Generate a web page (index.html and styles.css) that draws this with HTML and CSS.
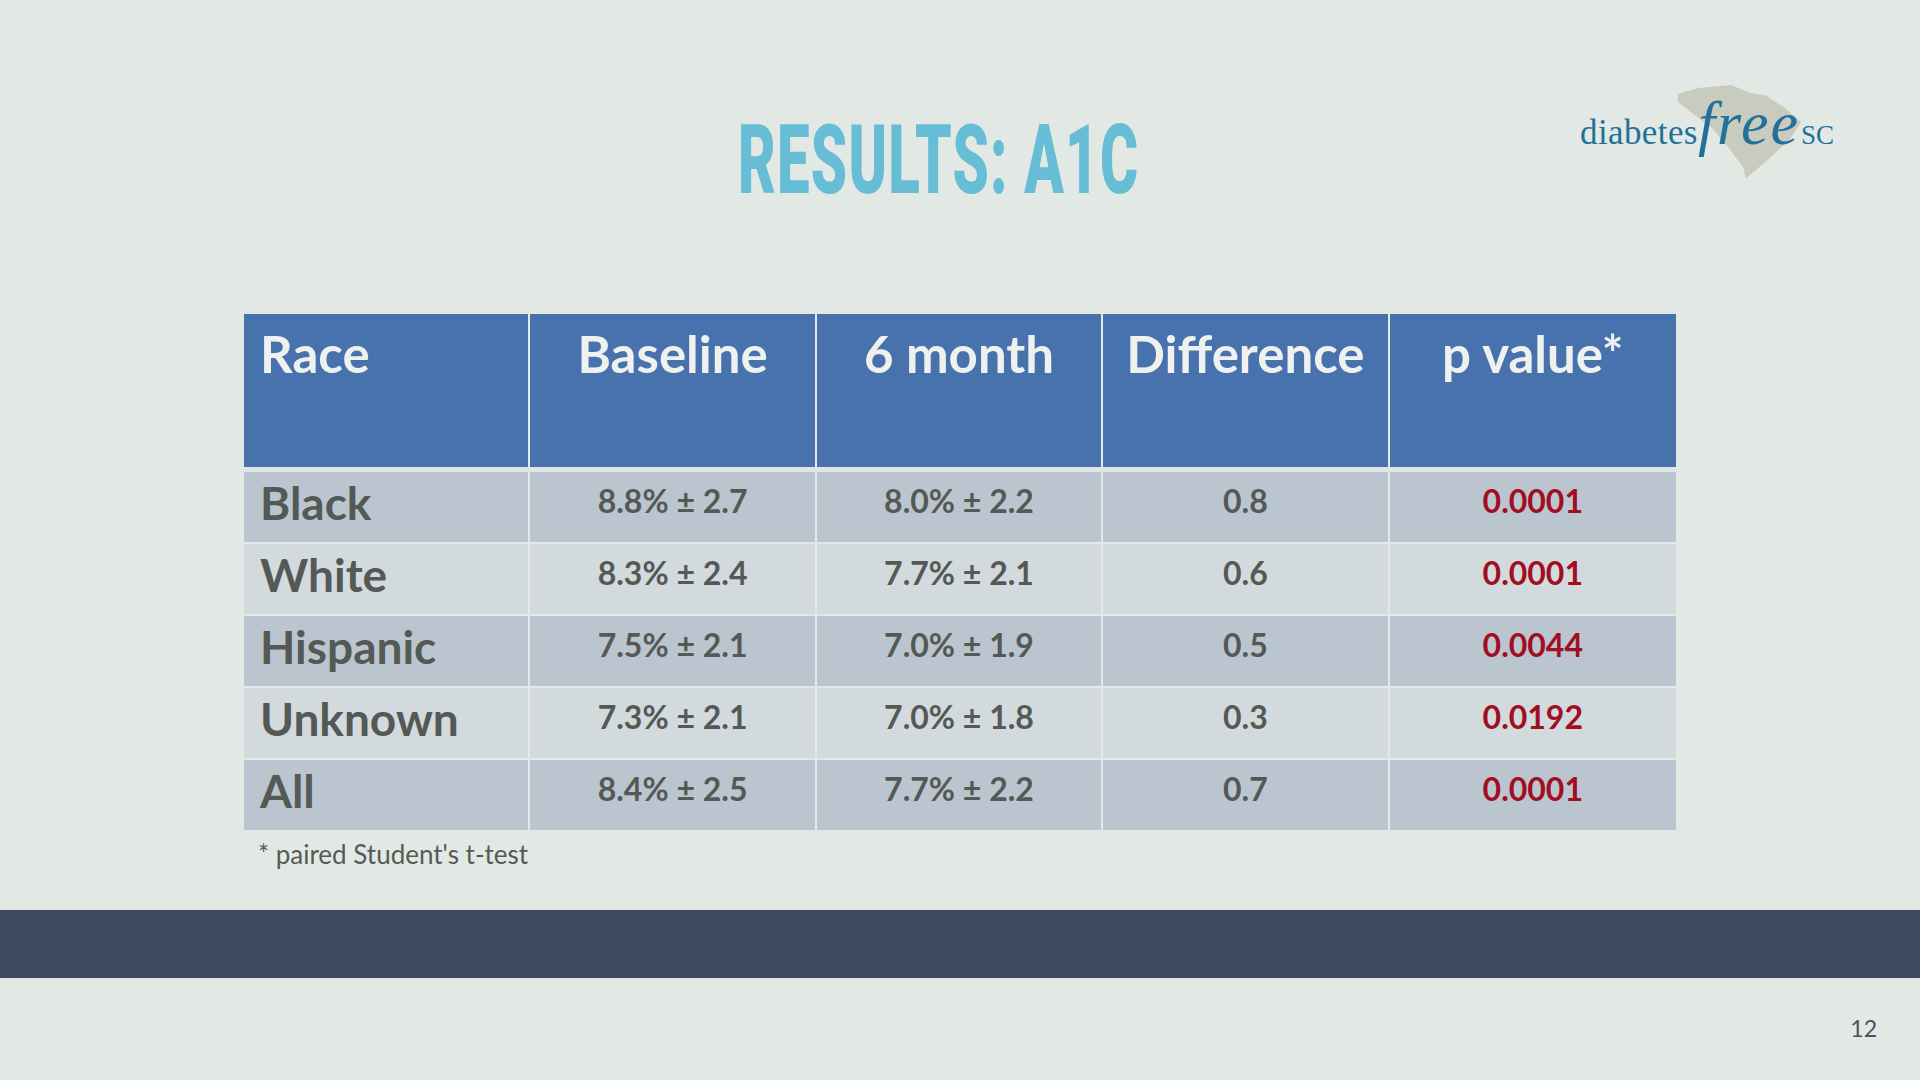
FILE: index.html
```html
<!DOCTYPE html>
<html lang="en">
<head>
<meta charset="utf-8">
<title>Results: A1C</title>
<link rel="stylesheet" href="styles.css">
</head>
<body>
<div class="slide">
  <header class="top">
    <div class="spacer"></div>
    <h1 class="title"><span class="title-text">RESULTS: A1C</span></h1>
    <div class="logo">
      <svg class="logo-state" viewBox="0 0 130 100" width="130" height="100" aria-hidden="true">
        <polygon points="0,12 20,6 53,3 73,11 87,13 107,26 123,40 113,56 93,75 78,88 68,96 65,85 50,65 33,45 10,28 0,20" fill="#c9cbbe"/>
      </svg>
      <div class="logo-text">
        <span class="logo-diabetes">diabetes</span><span class="logo-free">free</span><span class="logo-sc">SC</span>
      </div>
    </div>
  </header>

  <main class="content">
    <table class="results">
      <thead>
        <tr>
          <th class="col-race">Race</th>
          <th>Baseline</th>
          <th>6 month</th>
          <th>Difference</th>
          <th>p value*</th>
        </tr>
      </thead>
      <tbody>
        <tr class="odd">
          <td class="race">Black</td><td>8.8% ± 2.7</td><td>8.0% ± 2.2</td><td>0.8</td><td class="p">0.0001</td>
        </tr>
        <tr class="even">
          <td class="race">White</td><td>8.3% ± 2.4</td><td>7.7% ± 2.1</td><td>0.6</td><td class="p">0.0001</td>
        </tr>
        <tr class="odd">
          <td class="race">Hispanic</td><td>7.5% ± 2.1</td><td>7.0% ± 1.9</td><td>0.5</td><td class="p">0.0044</td>
        </tr>
        <tr class="even">
          <td class="race">Unknown</td><td>7.3% ± 2.1</td><td>7.0% ± 1.8</td><td>0.3</td><td class="p">0.0192</td>
        </tr>
        <tr class="odd last">
          <td class="race">All</td><td>8.4% ± 2.5</td><td>7.7% ± 2.2</td><td>0.7</td><td class="p">0.0001</td>
        </tr>
      </tbody>
    </table>
    <p class="footnote">* paired Student's t-test</p>
  </main>

  <div class="bar"></div>
  <footer class="bottom">
    <span class="page-num">12</span>
  </footer>
</div>
</body>
</html>
```

FILE: styles.css
```css
html, body {
  margin: 0;
  padding: 0;
}

body {
  background: #e2e9e4;
  font-family: "Lato", "Open Sans", "Liberation Sans", sans-serif;
}

.slide {
  width: 1920px;
  height: 1080px;
  display: flex;
  flex-direction: column;
  overflow: hidden;
}

.top {
  height: 314px;
  flex: none;
  display: grid;
  grid-template-columns: 1fr auto 1fr;
  align-items: start;
}

.title {
  margin: 0;
  padding-top: 112px;
  padding-right: 43px;
  font-family: "Roboto", "Liberation Sans", sans-serif;
  font-weight: 900;
  font-size: 96px;
  line-height: 1;
  color: #67bcd6;
}

.title-text {
  display: inline-block;
  transform: scaleX(0.605);
  transform-origin: center;
  letter-spacing: 2px;
}

.logo {
  justify-self: end;
  margin-top: 80px;
  margin-right: 88px;
  position: relative;
  width: 252px;
  height: 102px;
}

.logo-state {
  position: absolute;
  left: 98px;
  top: 2px;
}

.logo-text {
  position: relative;
  display: flex;
  align-items: baseline;
  padding-top: 8px;
  font-family: "Liberation Serif", "DejaVu Serif", serif;
  color: #22719b;
}

.logo-diabetes {
  font-size: 35px;
  letter-spacing: 0.4px;
}

.logo-free {
  font-size: 62px;
  font-style: italic;
  letter-spacing: 2px;
  margin-left: 0;
}

.logo-sc {
  font-size: 27px;
  letter-spacing: 0;
  margin-left: 1px;
}

.content {
  margin: 0 244px;
  flex: none;
}

.results {
  width: 100%;
  border-collapse: separate;
  border-spacing: 0;
  table-layout: fixed;
}

.results th,
.results td {
  border-right: 2px solid #e3e9e7;
  vertical-align: top;
  text-align: center;
}

.results th:last-child,
.results td:last-child {
  border-right: none;
}

.results th {
  height: 158px;
  box-sizing: border-box;
  padding: 9px 14px 0;
  background: #4872ad;
  color: #eef1ee;
  font-weight: 700;
  font-size: 51px;
  line-height: 1.2;
  border-bottom: 5px solid #dfe6e5;
}

.results th.col-race {
  text-align: left;
  padding-left: 16px;
}

.results td {
  height: 72px;
  box-sizing: border-box;
  padding: 10px 14px 0;
  font-weight: 700;
  font-size: 32px;
  line-height: 1.2;
  color: #545955;
  border-bottom: 2px solid #e3e9e7;
}

.results tr.last td {
  border-bottom: none;
  height: 70px;
}

.results tr.odd td {
  background: #bbc5cf;
}

.results tr.even td {
  background: #d3dadd;
}

.results td.race {
  text-align: left;
  padding-left: 16px;
  padding-top: 3px;
  font-size: 46px;
}

.results td.p {
  color: #a10e1f;
}

.footnote {
  margin: 9px 0 0;
  padding-left: 14px;
  font-size: 26px;
  line-height: 1.2;
  color: #555a56;
}

.bar {
  margin-top: auto;
  height: 68px;
  flex: none;
  background: #3f4a5e;
}

.bottom {
  height: 102px;
  flex: none;
  box-sizing: border-box;
  padding: 37px 43px 0 0;
  text-align: right;
}

.page-num {
  font-size: 23px;
  line-height: 1.2;
  color: #4a5160;
}
```
